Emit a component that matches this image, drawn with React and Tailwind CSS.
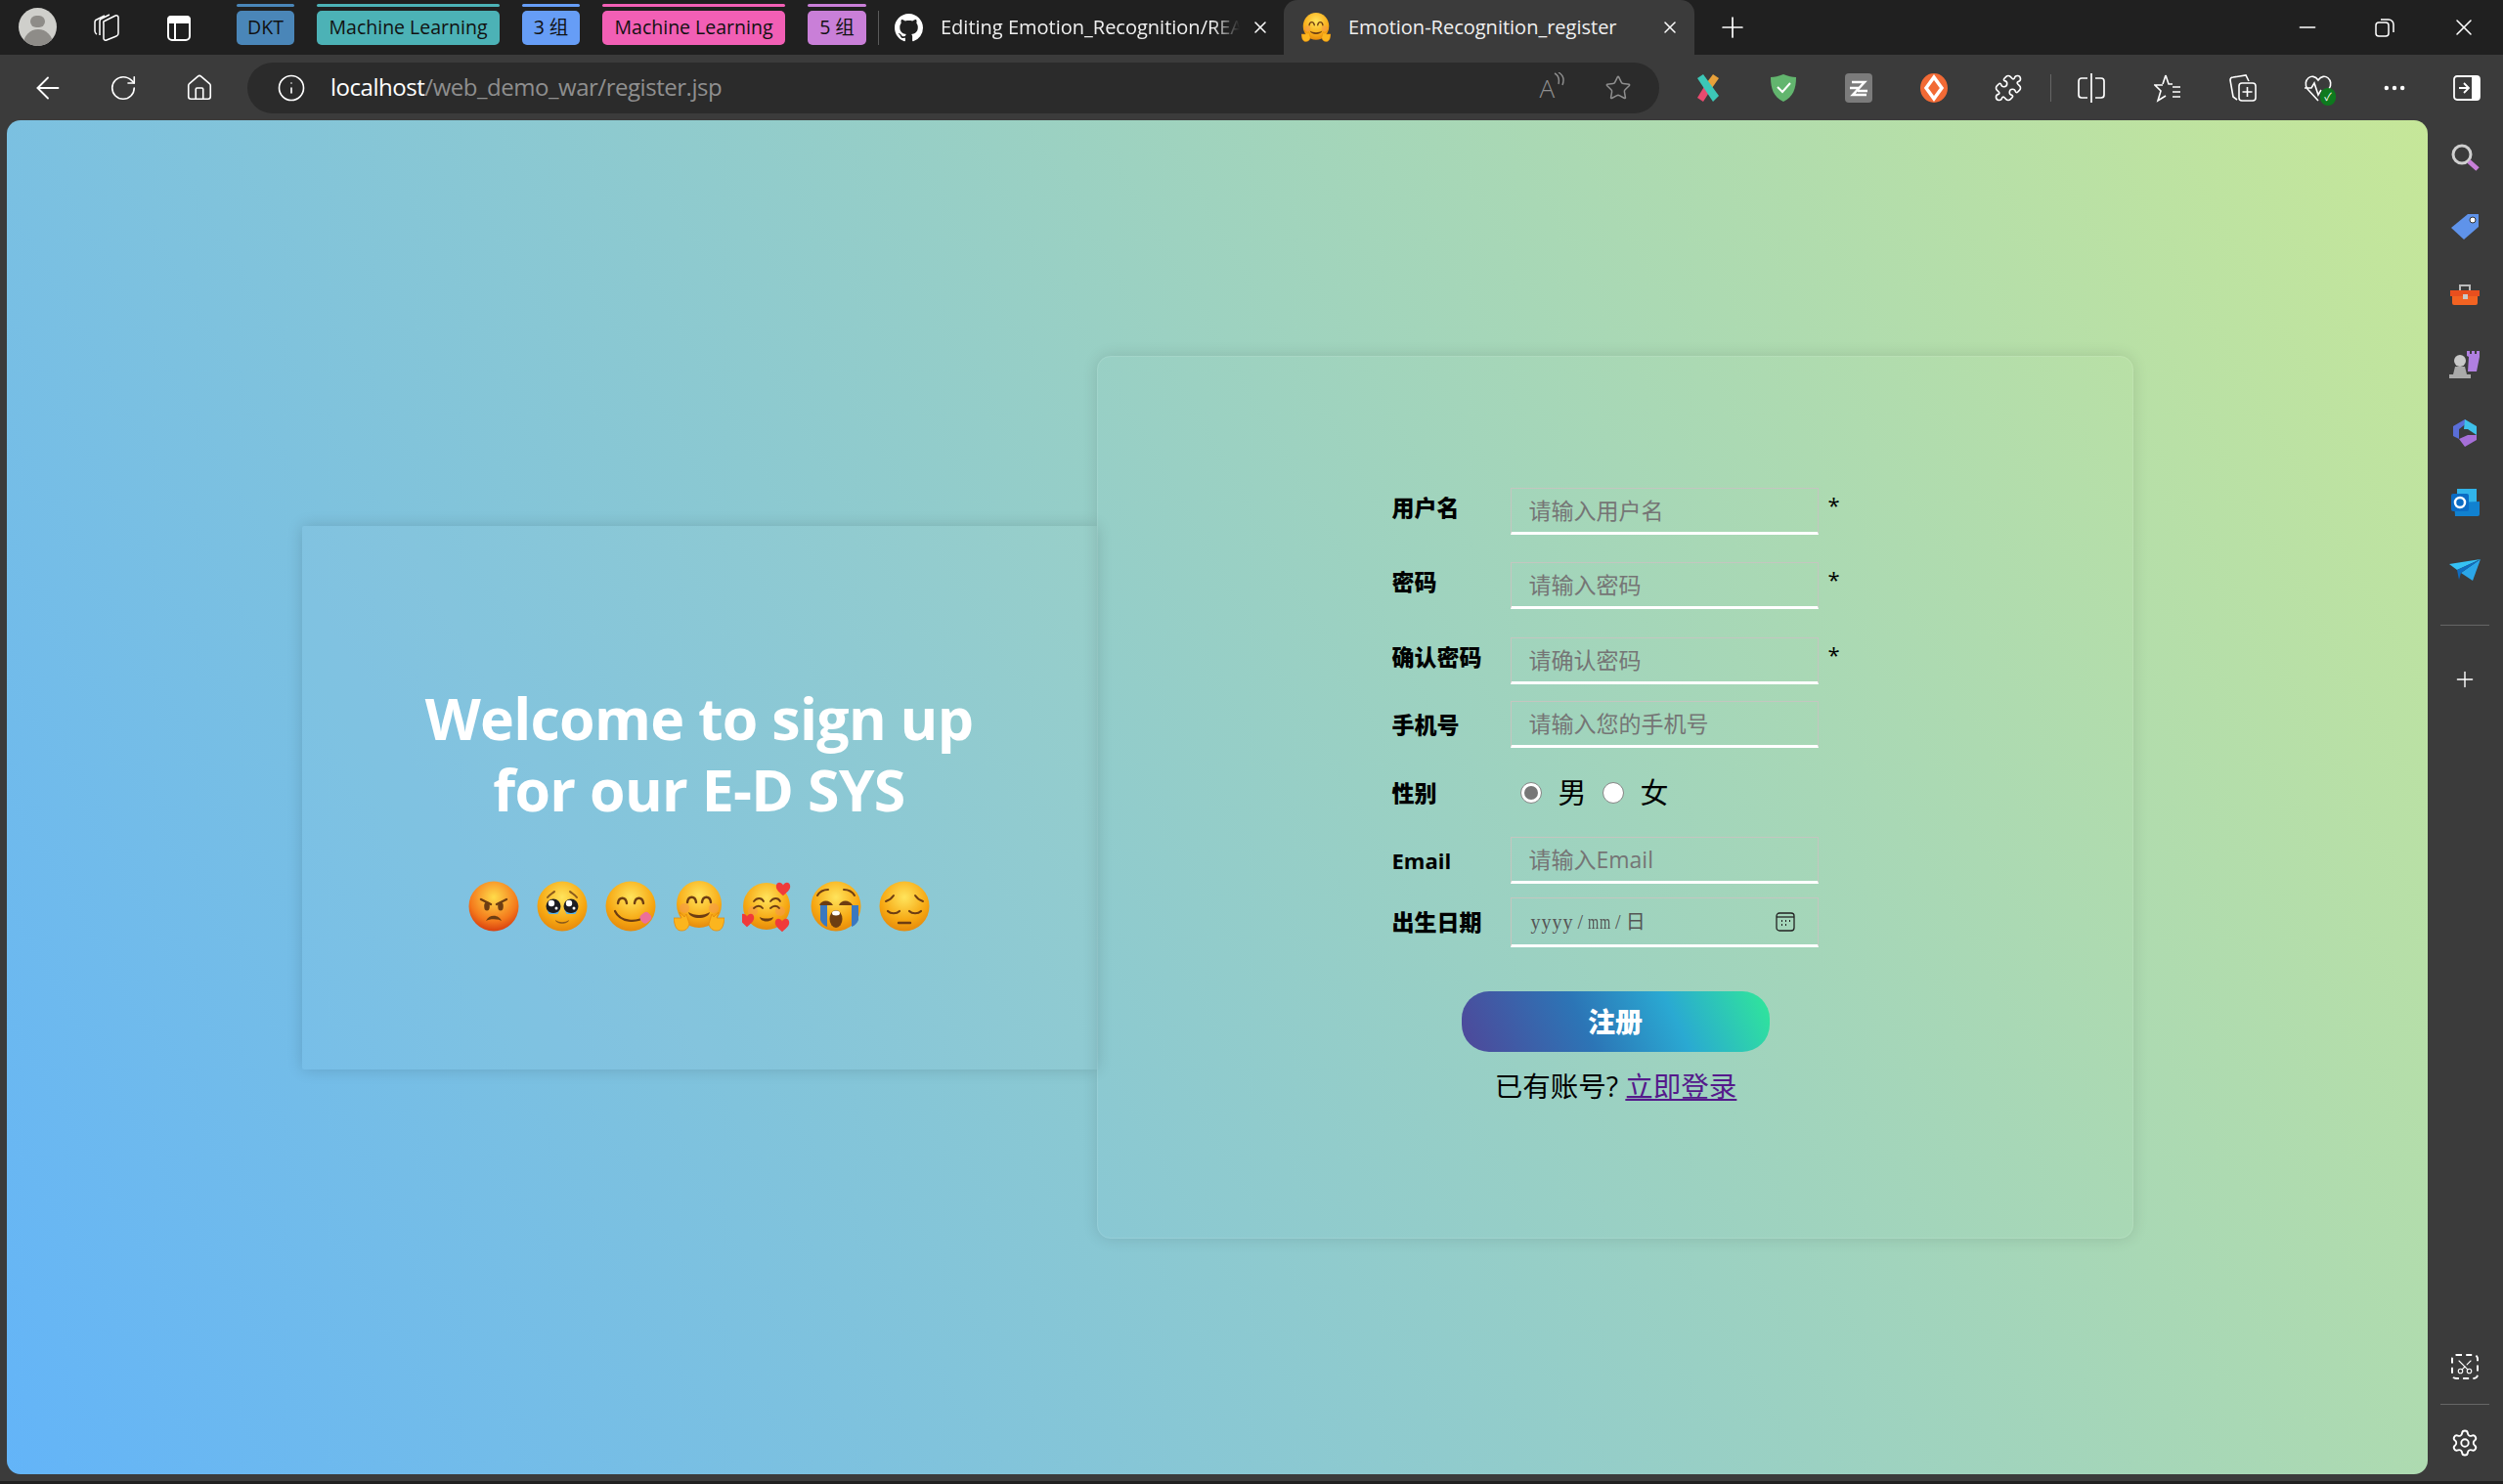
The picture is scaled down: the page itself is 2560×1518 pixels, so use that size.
import { ArrowLeft, RotateCw, House, Info, Star, Puzzle, Plus, X, Minus, Ellipsis, Settings, Scissors } from 'lucide-react'

const UI_FONT = 'font-["Open_Sans","Noto_Sans_CJK_SC",sans-serif]'

const GROUPS = [
  { name: 'DKT', bg: 'bg-[#4a86b8]', width: 'w-[59px]' },
  { name: 'Machine Learning', bg: 'bg-[#4cb2b6]', width: 'w-[187px]' },
  { name: '3 组', bg: 'bg-[#669df6]', width: 'w-[59px]' },
  { name: 'Machine Learning', bg: 'bg-[#f25fb5]', width: 'w-[187px]' },
  { name: '5 组', bg: 'bg-[#c97fd8]', width: 'w-[60px]' },
]

function Face({ id, c1 = '#ffe45c', c2 = '#f6a611', edge = '#e58a0c', children }) {
  return (
    <svg viewBox="0 0 52 52" className="h-[52px] w-[52px] shrink-0">
      <defs>
        <radialGradient id={id} cx="50%" cy="32%" r="68%">
          <stop offset="0%" stopColor={c1} />
          <stop offset="70%" stopColor={c2} />
          <stop offset="100%" stopColor={edge} />
        </radialGradient>
      </defs>
      <circle cx="26" cy="26" r="25.5" fill={`url(#${id})`} />
      {children}
    </svg>
  )
}

const BROWN = '#6d3d12'

function Heart({ x, y, s = 1 }) {
  return (
    <path
      transform={`translate(${x} ${y}) scale(${s})`}
      d="M0 -4C-2 -8 -8 -8 -8 -2.500C-8 2 -3 5 0 8C3 5 8 2 8 -2.500C8 -8 2 -8 0 -4Z"
      fill="#f03a3a"
    />
  )
}

function Emojis() {
  return (
    <div className="mt-[57px] flex justify-center gap-[18px]">
      <Face id="e1" c1="#ffdc4a" c2="#f47a1c" edge="#d9400f">
        <path d="M13 19l10 5M39 19l-10 5" stroke={BROWN} strokeWidth="2.400" strokeLinecap="round" />
        <ellipse cx="19" cy="26" rx="2.800" ry="4.500" fill={BROWN} />
        <ellipse cx="33" cy="26" rx="2.800" ry="4.500" fill={BROWN} />
        <path d="M18 41c3-7 13-7 16 0c-4-2.500-12-2.500-16 0Z" fill={BROWN} />
      </Face>
      <Face id="e2">
        <path d="M11 17c2-3 5-4 7-6M41 17c-2-3-5-4-7-6" stroke="#8a5a1c" strokeWidth="2" fill="none" strokeLinecap="round" />
        <circle cx="17" cy="26" r="7.500" fill="#1c1c22" />
        <circle cx="35" cy="26" r="7.500" fill="#1c1c22" />
        <circle cx="15" cy="23" r="3.200" fill="#fff" />
        <circle cx="33" cy="23" r="3.200" fill="#fff" />
        <circle cx="20" cy="28" r="1.500" fill="#fff" />
        <circle cx="38" cy="28" r="1.500" fill="#fff" />
        <path d="M10.500 30c3 4 10 4 13 0l-2 4h-9ZM28.500 30c3 4 10 4 13 0l-2 4h-9Z" fill="#58b4e8" />
        <path d="M19 40c4 3 10 3 14 0c-1 5-13 5-14 0Z" fill="#8a5a1c" />
      </Face>
      <Face id="e3">
        <path d="M13 23c1-7 8-7 9 0M30 23c1-7 8-7 9 0" stroke={BROWN} strokeWidth="2.400" fill="none" strokeLinecap="round" />
        <path d="M10 31c5 11 22 13 31 5" stroke={BROWN} strokeWidth="2.200" fill="none" strokeLinecap="round" />
        <rect x="36" y="33" width="11" height="10" rx="4" transform="rotate(-40 41 38)" fill="#ec6f9a" />
      </Face>
      <svg viewBox="0 0 52 52" className="h-[52px] w-[52px] shrink-0">
        <HugBody />
      </svg>
      <svg viewBox="0 0 52 52" className="h-[52px] w-[52px] shrink-0">
        <defs>
          <radialGradient id="e5" cx="50%" cy="32%" r="68%">
            <stop offset="0%" stopColor="#ffe45c" />
            <stop offset="70%" stopColor="#f6a611" />
            <stop offset="100%" stopColor="#e58a0c" />
          </radialGradient>
        </defs>
        <circle cx="25" cy="26" r="24" fill="url(#e5)" />
        <circle cx="11" cy="31" r="5" fill="#f59a4a" opacity="0.600" />
        <circle cx="39" cy="31" r="5" fill="#f59a4a" opacity="0.600" />
        <path d="M12 21c3-4 8-4 10 0M29 21c3-4 8-4 10 0M12 28c3-3 7-3 9 0M29 28c3-3 7-3 9 0" stroke={BROWN} strokeWidth="1.800" fill="none" strokeLinecap="round" />
        <path d="M18 37c4 2 10 2 14 0c-1 6-13 6-14 0Z" fill={BROWN} />
        <Heart x={42} y={8} s={0.900} />
        <Heart x={5} y={40} s={0.900} />
        <Heart x={41} y={45} s={0.900} />
      </svg>
      <Face id="e6">
        <path d="M7 15c3-5 8-6 11-6M45 15c-3-5-8-6-11-6" stroke={BROWN} strokeWidth="2" fill="none" strokeLinecap="round" />
        <path d="M9 25c2-6 11-6 14 0ZM29 25c2-6 11-6 14 0Z" fill={BROWN} />
        <path d="M10 25h7v22c-3-1-6-4-7-7ZM35 25h7v22c3-1 6-4 7-7V25Z" fill="#3a78c0" />
        <ellipse cx="26" cy="39" rx="6.500" ry="9" fill={BROWN} />
        <ellipse cx="26" cy="33" rx="4" ry="2.500" fill="#fff" />
      </Face>
      <Face id="e7">
        <path d="M7 21c3-1 6-3 8-6M45 21c-3-1-6-3-8-6" stroke={BROWN} strokeWidth="2" fill="none" strokeLinecap="round" />
        <path d="M9 31c3 3 9 3 12 0M31 31c3 3 9 3 12 0" stroke={BROWN} strokeWidth="2.200" fill="none" strokeLinecap="round" />
        <path d="M20 43h12" stroke={BROWN} strokeWidth="2.400" strokeLinecap="round" />
      </Face>
    </div>
  )
}

// hugging face, also used as the favicon of the active tab
function HugBody() {
  return (
    <>
      <defs>
        <radialGradient id="hug" cx="50%" cy="32%" r="68%">
          <stop offset="0%" stopColor="#ffe45c" />
          <stop offset="70%" stopColor="#f8ac18" />
          <stop offset="100%" stopColor="#e58a0c" />
        </radialGradient>
      </defs>
      <ellipse cx="26" cy="24" rx="23" ry="24" fill="url(#hug)" />
      <circle cx="11" cy="28" r="5" fill="#f59a4a" opacity="0.600" />
      <circle cx="41" cy="28" r="5" fill="#f59a4a" opacity="0.600" />
      <path d="M14 22c1-7 8-7 9 0M29 22c1-7 8-7 9 0" stroke={BROWN} strokeWidth="2.400" fill="none" strokeLinecap="round" />
      <path d="M15 32c6 4 16 4 22 0c-2 8-20 8-22 0Z" fill={BROWN} />
      <path d="M0 38l8 0l-2-6l5 5l2-3l3 10c-1 5-4 7-8 7c-5 0-7-4-8-13ZM52 38l-8 0l2-6l-5 5l-2-3l-3 10c1 5 4 7 8 7c5 0 7-4 8-13Z" fill="#fbb51e" stroke="#e58a0c" strokeWidth="0.800" />
    </>
  )
}

function Field({ label, placeholder, required, className = '' }) {
  const labelFont = label === 'Email' ? 'text-[22px] font-bold' : 'text-[23px] font-black'
  return (
    <div className={`flex items-center ${className}`}>
      <label className={`w-[121px] shrink-0 text-black ${labelFont} ${required ? 'mt-[-8px]' : ''}`}>{label}</label>
      <input
        placeholder={placeholder}
        className="h-[48px] w-[315px] border border-b-[3px] border-[#c4c6c0] border-b-white bg-transparent px-[18px] pb-[1px] text-[23px] outline-none placeholder:text-[#757575]"
      />
      {required && <span className="mt-[-14px] ml-[10px] text-[22px] leading-none text-black">*</span>}
    </div>
  )
}

function Radio({ checked }) {
  return (
    <span className="flex h-[22px] w-[22px] items-center justify-center rounded-full border border-[#858585] bg-white">
      {checked && <span className="h-[14px] w-[14px] rounded-full bg-[#777]" />}
    </span>
  )
}

function GroupChip({ group }) {
  return (
    <div className={`flex shrink-0 flex-col ${group.width}`}>
      <div className={`mt-[4px] h-[3px] rounded-full ${group.bg}`} />
      <div className={`mt-[4px] flex h-[35px] items-center justify-center rounded-[5px] pb-[1px] text-[19.500px] text-[#111] ${group.bg}`}>
        {group.name}
      </div>
    </div>
  )
}

function TabStrip() {
  return (
    <div className="flex h-[56px] items-start bg-[#202020] text-white">
      <div className="ml-[19px] mt-[8px] flex h-[39px] w-[39px] flex-col items-center overflow-hidden rounded-full bg-[#cfcfcb]">
        <div className="mt-[8px] h-[15px] w-[15px] rounded-full bg-[#8e8c88]" />
        <div className="mt-[2px] h-[20px] w-[30px] rounded-t-full bg-[#8e8c88]" />
      </div>
      <svg viewBox="0 0 28 28" className="ml-[37px] mt-[14px] h-[28px] w-[28px]" fill="none" stroke="#fff" strokeWidth="1.500">
        <path d="M11 8l12-6a2 2 0 0 1 3 2v16a3 3 0 0 1-2 3l-10 4a2 2 0 0 1-3-2V10a3 3 0 0 1 0-2Z" />
        <path d="M12 2L4 6a3 3 0 0 0-2 3v9a4 4 0 0 0 2 3" />
        <path d="M17 1L9 5a3 3 0 0 0-2 3v14" />
      </svg>
      <svg viewBox="0 0 24 26" className="ml-[48px] mt-[16px] h-[26px] w-[24px]" fill="none" stroke="#fff" strokeWidth="2">
        <rect x="1" y="1" width="22" height="24" rx="4" />
        <path d="M1 7h22V4a3 3 0 0 0-3-3H4a3 3 0 0 0-3 3Z" fill="#fff" />
        <path d="M8 7v18" />
      </svg>
      <div className="ml-[47px] flex items-start gap-[23px]">
        {GROUPS.map((g, i) => (
          <GroupChip key={i} group={g} />
        ))}
      </div>
      <div className="ml-[12px] mt-[11px] h-[35px] w-px bg-[#5a5a5a]" />
      <div className="ml-[16px] mt-0 flex h-[56px] w-[384px] items-center">
        <svg viewBox="0 0 16 16" className="h-[29px] w-[29px] shrink-0" fill="#fff">
          <path d="M8 0C3.580 0 0 3.580 0 8c0 3.540 2.290 6.530 5.470 7.590.4.070.55-.17.55-.38 0-.19-.01-.82-.01-1.490-2.010.37-2.530-.49-2.690-.94-.09-.23-.48-.94-.82-1.130-.28-.15-.68-.52-.01-.53.63-.01 1.080.58 1.230.82.72 1.210 1.870.87 2.330.66.070-.52.28-.87.51-1.070-1.780-.2-3.640-.89-3.640-3.950 0-.87.31-1.590.82-2.150-.08-.2-.36-1.020.08-2.120 0 0 .67-.21 2.200.82.64-.18 1.320-.27 2-.27s1.360.09 2 .27c1.530-1.040 2.200-.82 2.200-.82.44 1.100.16 1.920.08 2.120.51.56.82 1.270.82 2.150 0 3.070-1.870 3.750-3.650 3.950.29.25.54.73.54 1.480 0 1.070-.01 1.930-.01 2.200 0 .21.15.46.55.38A8.010 8.010 0 0 0 16 8c0-4.420-3.580-8-8-8Z" />
        </svg>
        <span className="ml-[18px] w-[306px] whitespace-nowrap text-[20px] text-[#f0f0f0] [mask-image:linear-gradient(to_right,#000_91%,transparent)]">
          Editing Emotion_Recognition/REA
        </span>
        <X className="ml-[11px] shrink-0" size={20} strokeWidth={1.800} />
      </div>
      <div className="ml-[14px] flex h-[56px] w-[420px] items-center rounded-t-[14px] bg-[#3b3b3b] pl-[18px]">
        <svg viewBox="0 0 52 52" className="h-[30px] w-[30px] shrink-0">
          <HugBody />
        </svg>
        <span className="ml-[18px] w-[302px] whitespace-nowrap text-[20px] text-[#f0f0f0]">Emotion-Recognition_register</span>
        <X className="ml-[17px] shrink-0" size={20} strokeWidth={1.800} />
      </div>
      <Plus className="ml-[22px] mt-[11px] shrink-0" size={34} strokeWidth={1.200} />
      <div className="ml-auto mt-[14px] flex items-center pr-[26px]">
        <Minus size={26} strokeWidth={1.500} />
        <svg viewBox="0 0 20 20" className="ml-[56px] h-[20px] w-[20px]" fill="none" stroke="#fff" strokeWidth="1.500">
          <rect x="1" y="5" width="13" height="14" rx="3" />
          <path d="M6 2h8a5 5 0 0 1 5 5v8" />
        </svg>
        <X className="ml-[57px]" size={28} strokeWidth={1.300} />
      </div>
    </div>
  )
}

function ToolbarIcons() {
  return (
    <div className="ml-[36px] flex items-center">
      <svg viewBox="0 0 28 32" className="h-[32px] w-[28px]">
        <path d="M19 2l6 4-7 10-5-6Z" fill="#e8a13a" />
        <path d="M9 30l-6-4 8-13 5 6Z" fill="#e84a6f" />
        <path d="M3 6l6-4 16 22-6 6Z" fill="#3cc7b7" />
      </svg>
      <svg viewBox="0 0 28 30" className="ml-[49px] h-[30px] w-[28px]">
        <path d="M14 1C9 3 5 4 1 4c0 12 3 20 13 25c10-5 13-13 13-25c-4 0-8-1-13-3Z" fill="#62b56e" />
        <path d="M8 14l5 5 8-9" stroke="#fff" strokeWidth="2" fill="none" />
      </svg>
      <svg viewBox="0 0 28 30" className="ml-[49px] h-[30px] w-[28px]">
        <rect width="28" height="30" rx="4" fill="#7b7b7b" />
        <path d="M7 9h13L8 22h14M5 15h9M13 18h10" stroke="#fff" strokeWidth="2.500" fill="none" />
      </svg>
      <svg viewBox="0 0 28 30" className="ml-[49px] h-[30px] w-[28px]">
        <ellipse cx="14" cy="15" rx="14" ry="15" fill="#f26a35" />
        <path d="M14 4l8 11-8 11-8-11Z" fill="none" stroke="#fff" strokeWidth="3.500" />
      </svg>
      <Puzzle className="ml-[47px] text-white" size={30} strokeWidth={1.300} />
      <div className="ml-[28px] h-[28px] w-px bg-[#666]" />
      <svg viewBox="0 0 28 30" className="ml-[27px] h-[30px] w-[28px]" fill="none" stroke="#fff" strokeWidth="1.700">
        <path d="M14 0v30M10 5H4a3 3 0 0 0-3 3v14a3 3 0 0 0 3 3h6M18 5h6a3 3 0 0 1 3 3v14a3 3 0 0 1-3 3h-6" />
      </svg>
      <svg viewBox="0 0 30 30" className="ml-[50px] h-[30px] w-[30px]" fill="none" stroke="#fff" strokeWidth="1.600">
        <path d="M12 2l3 9h4M19 14h8M19 19h8M19 24h8M9 12H1l6 6-3 10 8-5M12 2L9 11" />
      </svg>
      <svg viewBox="0 0 30 30" className="ml-[46px] h-[30px] w-[30px]" fill="none" stroke="#fff" strokeWidth="1.600">
        <rect x="11" y="10" width="17" height="18" rx="3" />
        <path d="M19.500 14v10M14.500 19h10M9 27L5 24 2 7a3 3 0 0 1 3-3l13-2 3 6" />
      </svg>
      <div className="relative ml-[47px] h-[30px] w-[30px]">
        <svg viewBox="0 0 30 30" className="h-[30px] w-[30px]" fill="none" stroke="#fff" strokeWidth="1.600">
          <path d="M15 28L4 16C-2 7 9 -2 15 7c6-9 17 0 11 9M1 15h7l3-5 4 12 3-5" />
        </svg>
        <span className="absolute bottom-[-3px] right-[-3px] flex h-[18px] w-[16px] items-center justify-center rounded-full bg-[#0e7a1e] text-[11px] leading-none text-white">✓</span>
      </div>
      <Ellipsis className="ml-[49px] text-white" size={28} strokeWidth={1.800} />
      <svg viewBox="0 0 28 26" className="ml-[46px] h-[26px] w-[28px]">
        <rect x="1" y="1" width="26" height="24" rx="3" fill="none" stroke="#fff" strokeWidth="1.800" />
        <path d="M19 1h5a3 3 0 0 1 3 3v18a3 3 0 0 1-3 3h-5Z" fill="#fff" />
        <path d="M6 13h9M11 8l5 5-5 5" fill="none" stroke="#fff" strokeWidth="1.800" />
      </svg>
    </div>
  )
}

function Toolbar() {
  return (
    <div className="flex h-[67px] items-center bg-[#3b3b3b] text-white">
      <ArrowLeft className="ml-[31px] shrink-0" size={36} strokeWidth={1.200} />
      <RotateCw className="ml-[44px] shrink-0" size={30} strokeWidth={1.300} />
      <House className="ml-[48px] shrink-0" size={30} strokeWidth={1.300} />
      <div className="ml-[34px] flex h-[52px] w-[1444px] shrink-0 items-center rounded-full bg-[#2b2b2b] pl-[30px]">
        <Info size={30} strokeWidth={1.300} />
        <span className="ml-[25px] pb-[2px] text-[24px] tracking-[-0.470px] text-white">
          localhost<span className="text-[#8f8f8f]">/web_demo_war/register.jsp</span>
        </span>
        <span className="relative ml-auto pr-[10px] text-[26px] font-light leading-none text-[#8f8f8f]">
          A
          <svg viewBox="0 0 12 18" className="absolute right-0 top-[-3px] h-[18px] w-[12px]" fill="none" stroke="#8f8f8f" strokeWidth="1.400">
            <path d="M2 1c4 2 5 6 4 11M6 0c5 3 6 8 4 13" />
          </svg>
        </span>
        <Star className="ml-[41px] mr-[28px] text-[#8f8f8f]" size={28} strokeWidth={1.300} />
      </div>
      <ToolbarIcons />
    </div>
  )
}

function SideBar() {
  return (
    <div className="flex w-[77px] shrink-0 flex-col items-center bg-[#3b3b3b] pr-[2px] text-white">
      <svg viewBox="0 0 30 30" className="mt-[23px] h-[30px] w-[30px]">
        <circle cx="12" cy="12" r="9" fill="none" stroke="#cfcfcf" strokeWidth="3" />
        <path d="M19 19l9 8" stroke="#c77fd8" strokeWidth="5" />
      </svg>
      <svg viewBox="0 0 30 30" className="mt-[40px] h-[30px] w-[30px]">
        <path d="M1 17L18 3h11v13L14 29Z" fill="#5f93ea" />
        <circle cx="23" cy="9" r="3" fill="#fff" stroke="#333" />
      </svg>
      <svg viewBox="0 0 30 30" className="mt-[43px] h-[30px] w-[30px]">
        <path d="M10 8V3h10v5" fill="none" stroke="#bbb" strokeWidth="2" />
        <path d="M0 8h30v6H0Z" fill="#e84f1e" />
        <path d="M2 14h26v7a2 2 0 0 1-2 2H4a2 2 0 0 1-2-2Z" fill="#f26322" />
        <rect x="13" y="12" width="5" height="5" fill="#c8c8c8" />
      </svg>
      <svg viewBox="0 0 32 30" className="mt-[39px] h-[30px] w-[32px]">
        <circle cx="11" cy="11" r="6" fill="#c8c8c8" />
        <path d="M6 17h10l2 8h4v4H0v-4h4Z" fill="#aaa" />
        <path d="M18 1h3v3h2V1h3v3h2V1h3v6l-3 15H19l1-15l-2-1Z" fill="#b07fe0" />
      </svg>
      <svg viewBox="0 0 30 30" className="mt-[40px] h-[30px] w-[30px]">
        <path d="M15 1L3 8v10l6 3V11l9-7Z" fill="#5a6ed8" />
        <path d="M15 1l12 7v9l-9-6h-4Z" fill="#3ec0ea" />
        <path d="M27 17v5L15 29 9 21l9-4Z" fill="#a66fd8" />
      </svg>
      <svg viewBox="0 0 30 30" className="mt-[41px] h-[30px] w-[30px]">
        <path d="M7 1h20v14H7Z" fill="#31b4ea" />
        <path d="M4 15l26-1v13a2 2 0 0 1-2 2H5Z" fill="#1181d0" />
        <rect x="1" y="6" width="18" height="18" rx="2" fill="#0b6cc4" />
        <circle cx="10" cy="15" r="5" fill="none" stroke="#fff" strokeWidth="2.500" />
      </svg>
      <svg viewBox="0 0 32 24" className="mt-[43px] h-[24px] w-[32px]">
        <path d="M0 5L32 0 8 11Z" fill="#35c2f5" />
        <path d="M32 0L24 22 12 14Z" fill="#2ba6e8" />
        <path d="M8 11L32 0 12 14l-2 7Z" fill="#0f6cc0" />
      </svg>
      <div className="mt-[43px] h-px w-[50px] bg-[#666]" />
      <Plus className="mt-[42px]" size={26} strokeWidth={1.300} />
      <div className="mt-auto flex flex-col items-center">
        <div className="flex h-[26px] w-[28px] items-center justify-center rounded-[5px] border-2 border-dashed border-white">
          <Scissors size={18} strokeWidth={1.500} className="-rotate-90" />
        </div>
        <div className="mt-[25px] h-px w-[50px] bg-[#666]" />
        <Settings className="mb-[24px] mt-[24px]" size={30} strokeWidth={1.500} />
      </div>
    </div>
  )
}

export default function App() {
  return (
    <div className={`flex h-[1518px] w-[2560px] flex-col overflow-hidden border-b-[3px] border-[#202020] bg-[#3b3b3b] ${UI_FONT}`}>
      <TabStrip />
      <Toolbar />
      <div className="flex min-h-0 flex-1">
        <div className="mb-[7px] ml-[7px] flex w-[2476px] items-center justify-center rounded-[14px] bg-[linear-gradient(60deg,#63b4f8,#c6e799)]">
          <div className="flex h-[556px] w-[813px] flex-col items-center rounded-l-[2px] bg-white/[0.03] pt-[160px] shadow-[0_0_16px_rgba(0,0,0,0.15)]">
            <h1 className="text-center text-[59px] font-bold leading-[73px] tracking-[-0.700px] text-white">
              Welcome to sign up
              <br />
              for our E-D SYS
            </h1>
            <Emojis />
          </div>
          <div className="z-10 flex h-[903px] w-[1060px] flex-col rounded-[14px] border border-white/10 pl-[301px] pt-[134px] shadow-[0_0_16px_rgba(0,0,0,0.12)]">
            <Field label="用户名" placeholder="请输入用户名" required />
            <Field label="密码" placeholder="请输入密码" required className="mt-[28px]" />
            <Field label="确认密码" placeholder="请确认密码" required className="mt-[29px]" />
            <Field label="手机号" placeholder="请输入您的手机号" className="mt-[17px]" />
            <div className="mt-[31px] flex h-[30px] items-center">
              <label className="w-[121px] shrink-0 text-[23px] font-black text-black">性别</label>
              <span className="ml-[10px]">
                <Radio checked />
              </span>
              <span className="ml-[17px] text-[29px] text-black">男</span>
              <span className="ml-[16px]">
                <Radio />
              </span>
              <span className="ml-[17px] text-[29px] text-black">女</span>
            </div>
            <Field label="Email" placeholder="请输入Email" className="mt-[30px]" />
            <div className="mt-[14px] flex items-center">
              <label className="w-[121px] shrink-0 text-[23px] font-black text-black">出生日期</label>
              <div className="flex h-[51px] w-[315px] items-center border border-b-[3px] border-[#c4c6c0] border-b-white pl-[20px] pr-[23px] font-['Liberation_Serif','Noto_Sans_CJK_SC',serif] text-[20px] text-[#555]">
                <span className="whitespace-nowrap tracking-[1px]">
                  yyyy<span className="mx-[4px]">/</span>
                  <span className="inline-block w-[24px] origin-left scale-x-[0.72]">mm</span>
                  <span className="mx-[4px]">/</span>日
                </span>
                <svg viewBox="0 0 20 20" className="ml-auto h-[20px] w-[20px]" fill="none" stroke="#222" strokeWidth="1.300">
                  <rect x="1" y="1" width="18" height="18" rx="3" />
                  <path d="M1 5h18" />
                  <path d="M6 9h1M10 9h1M14 9h1M6 13h1M10 13h1" strokeWidth="2" />
                </svg>
              </div>
            </div>
            <button className="ml-[71px] mt-[45px] h-[62px] w-[315px] rounded-[28px] bg-[linear-gradient(65deg,#4f4799,#2c75b6_40%,#2aa9d2_68%,#30e898)] text-[28px] font-black text-white">
              注册
            </button>
            <p className="mt-[15px] w-[458px] text-center text-[28.500px] leading-[40px] text-black">
              已有账号? <a className="text-[#551a8b] underline">立即登录</a>
            </p>
          </div>
        </div>
        <SideBar />
      </div>
    </div>
  )
}
